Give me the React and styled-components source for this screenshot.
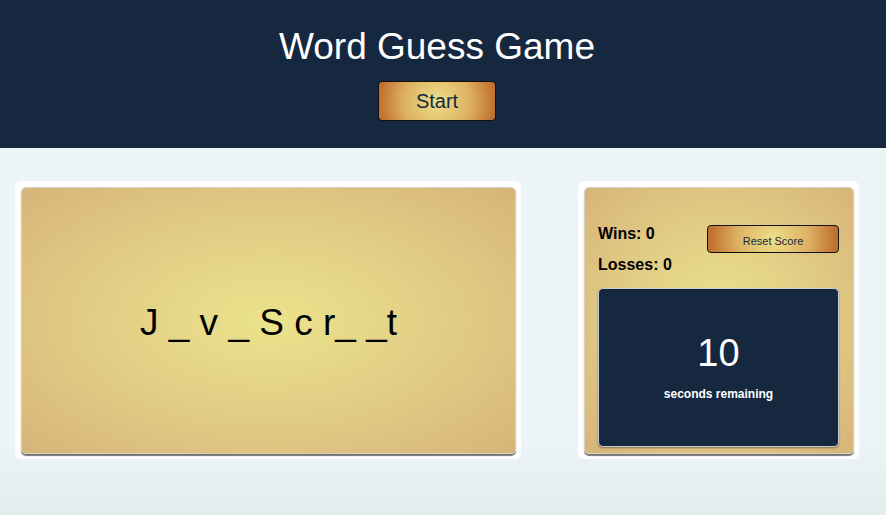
import React from "react";
import styled, { createGlobalStyle } from "styled-components";

const Global = createGlobalStyle`
  html, body { margin: 0; padding: 0; }
  body {
    font-family: "Liberation Sans", Arial, sans-serif;
    background: linear-gradient(180deg, #edf4f8 0%, #edf4f8 85%, #e4ecf0 100%);
    min-height: 515px;
  }
`;

const Page = styled.div`
  min-height: 515px;
  display: flex;
  flex-direction: column;
`;

const Header = styled.header`
  background: #16283f;
  height: 148px;
  box-sizing: border-box;
  padding: 25px 12px 0 0;
  display: flex;
  flex-direction: column;
  align-items: center;
  gap: 12px;
`;

const Title = styled.h1`
  margin: 0;
  color: #ffffff;
  font-weight: 400;
  font-size: 37px;
  line-height: 44px;
`;

const GoldButton = styled.button`
  font-family: "Liberation Sans", Arial, sans-serif;
  width: ${(p) => p.$w}px;
  height: ${(p) => p.$h}px;
  font-size: ${(p) => p.$fs}px;
  color: #16283f;
  border: 1px solid #111;
  border-radius: 4px;
  background: radial-gradient(circle at center, #ede088 0%, #ddb062 55%, #c0702f 95%);
  padding: ${(p) => p.$pt || 0}px 0 0 0;
  cursor: pointer;
`;

const Main = styled.main`
  display: grid;
  grid-template-columns: 506px 281px;
  column-gap: 57px;
  padding: 33px 27px 0 15px;
`;

const Frame = styled.div`
  background: #ffffff;
  border-radius: 6px;
  padding: 6px 5px 5px 6px;
  height: 278px;
  box-sizing: border-box;
`;

const Card = styled.div`
  height: 100%;
  box-sizing: border-box;
  border: 1px solid #d9d2c0;
  border-radius: 5px;
  background: radial-gradient(ellipse at center, #ebe38c 0%, #e2cd85 50%, #d7b47a 100%);
  box-shadow: 0 2px 1px rgba(0, 0, 0, 0.55);
`;

const WordCard = styled(Card)`
  display: flex;
  align-items: center;
  justify-content: center;
`;

const Word = styled.div`
  font-size: 37px;
  color: #000;
  white-space: pre;
  padding-top: 4px;
`;

const ScoreCard = styled(Card)`
  padding: 34px 14px 6px 13px;
  display: flex;
  flex-direction: column;
`;

const ScoreTop = styled.div`
  display: flex;
  justify-content: space-between;
  align-items: flex-start;
`;

const Stats = styled.div`
  display: flex;
  flex-direction: column;
  gap: 12px;
  padding-top: 2px;
`;

const Stat = styled.div`
  font-size: 16px;
  font-weight: 700;
  color: #000;
  line-height: 19px;
`;

const ResetWrap = styled.div`
  padding-top: 3px;
`;

const Timer = styled.div`
  margin-top: 14px;
  height: 160px;
  box-sizing: border-box;
  background: #16283f;
  border: 1px solid #c9ccd2;
  border-radius: 5px;
  box-shadow: 0 1px 2px rgba(0, 0, 0, 0.4);
  display: flex;
  flex-direction: column;
  align-items: center;
  justify-content: center;
  color: #ffffff;
  gap: 13px;
  padding-bottom: 3px;
`;

const Seconds = styled.div`
  font-size: 38px;
  line-height: 42px;
`;

const Label = styled.div`
  font-size: 12px;
  font-weight: 700;
`;

export default function App() {
  return (
    <>
      <Global />
      <Page>
        <Header>
          <Title>Word Guess Game</Title>
          <GoldButton $w={118} $h={40} $fs={20}>Start</GoldButton>
        </Header>
        <Main>
          <Frame>
            <WordCard>
              <Word>{"J _ v _ S c r_ _t"}</Word>
            </WordCard>
          </Frame>
          <Frame>
            <ScoreCard>
              <ScoreTop>
                <Stats>
                  <Stat>Wins: 0</Stat>
                  <Stat>Losses: 0</Stat>
                </Stats>
                <ResetWrap>
                  <GoldButton $w={132} $h={28} $fs={11} $pt={4}>Reset Score</GoldButton>
                </ResetWrap>
              </ScoreTop>
              <Timer>
                <Seconds>10</Seconds>
                <Label>seconds remaining</Label>
              </Timer>
            </ScoreCard>
          </Frame>
        </Main>
      </Page>
    </>
  );
}
